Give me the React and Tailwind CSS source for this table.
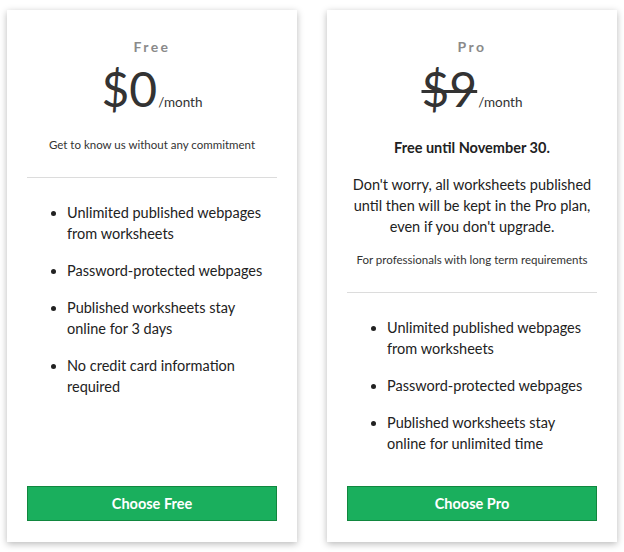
import React from "react";

const plans = [
  {
    name: "Free",
    price: "$0",
    strike: false,
    intro: null,
    note: "Get to know us without any commitment",
    features: [
      "Unlimited published webpages from worksheets",
      "Password-protected webpages",
      "Published worksheets stay online for 3 days",
      "No credit card information required",
    ],
    cta: "Choose Free",
  },
  {
    name: "Pro",
    price: "$9",
    strike: true,
    intro: {
      title: "Free until November 30.",
      body: "Don't worry, all worksheets published until then will be kept in the Pro plan, even if you don't upgrade.",
    },
    note: "For professionals with long term requirements",
    features: [
      "Unlimited published webpages from worksheets",
      "Password-protected webpages",
      "Published worksheets stay online for unlimited time",
    ],
    cta: "Choose Pro",
  },
];

const PlanCard = ({ plan }) => (
  <div className="w-[290px] h-[532px] bg-white shadow-[0_2px_7px_rgba(0,0,0,0.28)] flex flex-col px-5 pb-[21px] text-[#333]">
    <h3 className="mt-[27px] text-center text-[14px] leading-[20px] font-bold tracking-[0.17em] text-[#8a8a8a]">
      {plan.name}
    </h3>
    <div className="mt-[4px] flex items-baseline justify-center">
      <span
        className={
          "text-[48px] leading-[56px] text-[#333] " +
          (plan.strike ? "line-through decoration-[3px]" : "")
        }
      >
        {plan.price}
      </span>
      <span className="text-[13.5px] ml-[1px]">/month</span>
    </div>
    {plan.intro && (
      <div className="mt-[21px] text-center">
        <p className="text-[14.5px] font-bold leading-[20px] text-[#222]">
          {plan.intro.title}
        </p>
        <p className="mt-[16px] -mx-[3px] text-[14.5px] leading-[21px] text-[#222]">
          {plan.intro.body}
        </p>
      </div>
    )}
    <p
      className={
        "text-center text-[11.5px] leading-[16px] text-[#333] " +
        (plan.intro ? "mt-[15px]" : "mt-[20px]")
      }
    >
      {plan.note}
    </p>
    <hr className="mt-[24px] border-t border-[#dcdcdc]" />
    <ul className="mt-[24px] pl-[40px] list-disc text-[14.5px] leading-[21px] text-[#222] flex flex-col gap-[16px]">
      {plan.features.map((f) => (
        <li key={f}>{f}</li>
      ))}
    </ul>
    <button className="mt-auto h-[35px] bg-[#1aaf5d] border border-[#11873f] text-white text-[14.5px] font-bold">
      {plan.cta}
    </button>
  </div>
);

export default function App() {
  return (
    <div
      className="min-h-[552px] bg-white flex gap-[30px] pl-[7px] pt-[10px]"
      style={{ fontFamily: "Lato, 'Noto Sans', sans-serif" }}
    >
      {plans.map((p) => (
        <PlanCard key={p.name} plan={p} />
      ))}
    </div>
  );
}
